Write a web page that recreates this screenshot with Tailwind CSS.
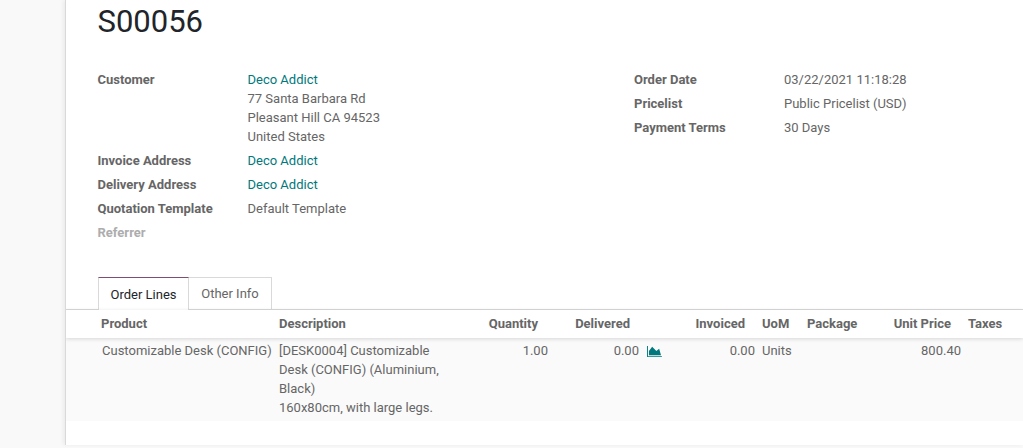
<!DOCTYPE html>
<html><head><script src="https://cdn.jsdelivr.net/npm/@tailwindcss/browser@4"></script></head>
<body class="m-0 overflow-hidden bg-[#f9f9f9] font-['Roboto',sans-serif] text-[13px] leading-[19px] text-[#666666]">
<div class="w-[1023px] h-[448px] overflow-hidden flex">
  <div class="w-[65px] shrink-0 bg-[#f9f9f9]"></div>
  <main class="w-[958px] h-[445px] shrink-0 bg-white border-l border-[#d9d9d9] shadow-[-2px_0_4px_rgba(0,0,0,0.06)] overflow-hidden">
    <h1 class="pl-[31.5px] m-0 mt-[3px] text-[31px] leading-[38px] font-normal text-[#212529]">S00056</h1>
    <section class="pl-[31.5px] pt-[29px] flex h-[236px]">
      <div class="w-[536.5px] flex flex-col gap-[5px]">
        <div class="flex"><div class="w-[150px] font-bold">Customer</div><div><a class="text-[#00787c] block">Deco Addict</a>77 Santa Barbara Rd<br>Pleasant Hill CA 94523<br>United States</div></div>
        <div class="flex"><div class="w-[150px] font-bold">Invoice Address</div><a class="text-[#00787c]">Deco Addict</a></div>
        <div class="flex"><div class="w-[150px] font-bold">Delivery Address</div><a class="text-[#00787c]">Deco Addict</a></div>
        <div class="flex"><div class="w-[150px] font-bold">Quotation Template</div><div>Default Template</div></div>
        <div class="flex"><div class="w-[150px] font-bold text-[#adadad]">Referrer</div></div>
      </div>
      <div class="flex flex-col gap-[5px]">
        <div class="flex"><div class="w-[150px] font-bold">Order Date</div><div>03/22/2021 11:18:28</div></div>
        <div class="flex"><div class="w-[150px] font-bold">Pricelist</div><div>Public Pricelist (USD)</div></div>
        <div class="flex"><div class="w-[150px] font-bold">Payment Terms</div><div>30 Days</div></div>
      </div>
    </section>
    <nav class="pl-[32px] h-[33px] flex border-b border-[#d9d9d9]">
      <div class="h-[33px] w-[91px] flex items-center justify-center bg-white border border-b-0 border-[#d9d9d9] border-t-[#7c4e73] text-[#212529]">Order Lines</div>
      <div class="h-[32px] w-[83px] flex items-center justify-center border border-l-0 border-b-0 border-[#d9d9d9]">Other Info</div>
    </nav>
    <table class="table-fixed border-collapse w-[957px]">
      <colgroup><col class="w-[32px]"><col class="w-[178px]"><col class="w-[168px]"><col class="w-[108px]"><col class="w-[91px]"><col class="w-[26px]"><col class="w-[90px]"><col class="w-[44px]"><col class="w-[76px]"><col class="w-[86px]"><col class="w-[58px]"></colgroup>
      <thead>
        <tr class="h-[28px] bg-white relative z-10 shadow-[0_1px_4px_rgba(0,0,0,0.15)]">
          <th class="font-bold pb-[2px]"></th>
          <th class="text-left font-bold pl-[3px] pb-[2px]">Product</th>
          <th class="text-left font-bold pl-[3px] pb-[2px]">Description</th>
          <th class="text-right font-bold pr-[14px] pb-[2px]">Quantity</th>
          <th class="text-right font-bold pr-[13px] pb-[2px]">Delivered</th>
          <th class="pb-[2px]"></th>
          <th class="text-right font-bold pr-[14px] pb-[2px]">Invoiced</th>
          <th class="text-left font-bold pl-[3px] pb-[2px]">UoM</th>
          <th class="text-left font-bold pl-[4px] pb-[2px]">Package</th>
          <th class="text-right font-bold pr-[14px] pb-[2px]">Unit Price</th>
          <th class="text-left font-bold pl-[3px] pb-[2px]">Taxes</th>
        </tr>
      </thead>
      <tbody>
        <tr class="bg-[#fafafa] align-top">
          <td></td>
          <td class="pl-[4px] pt-[3px] pb-[4px]">Customizable Desk (CONFIG)</td>
          <td class="pl-[3px] pr-[4px] pt-[3px] pb-[4px]">[DESK0004] Customizable Desk (CONFIG) (Aluminium, Black)<br>160x80cm, with large legs.</td>
          <td class="text-right pr-[4px] pt-[3px]">1.00</td>
          <td class="text-right pr-[4px] pt-[3px]">0.00</td>
          <td class="pt-[7px] pl-[4px]"><svg class="w-[15px] h-[13px] block text-[#00787c]" viewBox="0 0 2048 1792" fill="currentColor"><path d="M2048 1536v128H0V128h128v1408h1920zM1664 512l256 896H256V832l448-576 576 576z"/></svg></td>
          <td class="text-right pr-[4px] pt-[3px]">0.00</td>
          <td class="pl-[3px] pt-[3px]">Units</td>
          <td></td>
          <td class="text-right pr-[4px] pt-[3px]">800.40</td>
          <td></td>
        </tr>
      </tbody>
    </table>
  </main>
</div>
</body></html>
